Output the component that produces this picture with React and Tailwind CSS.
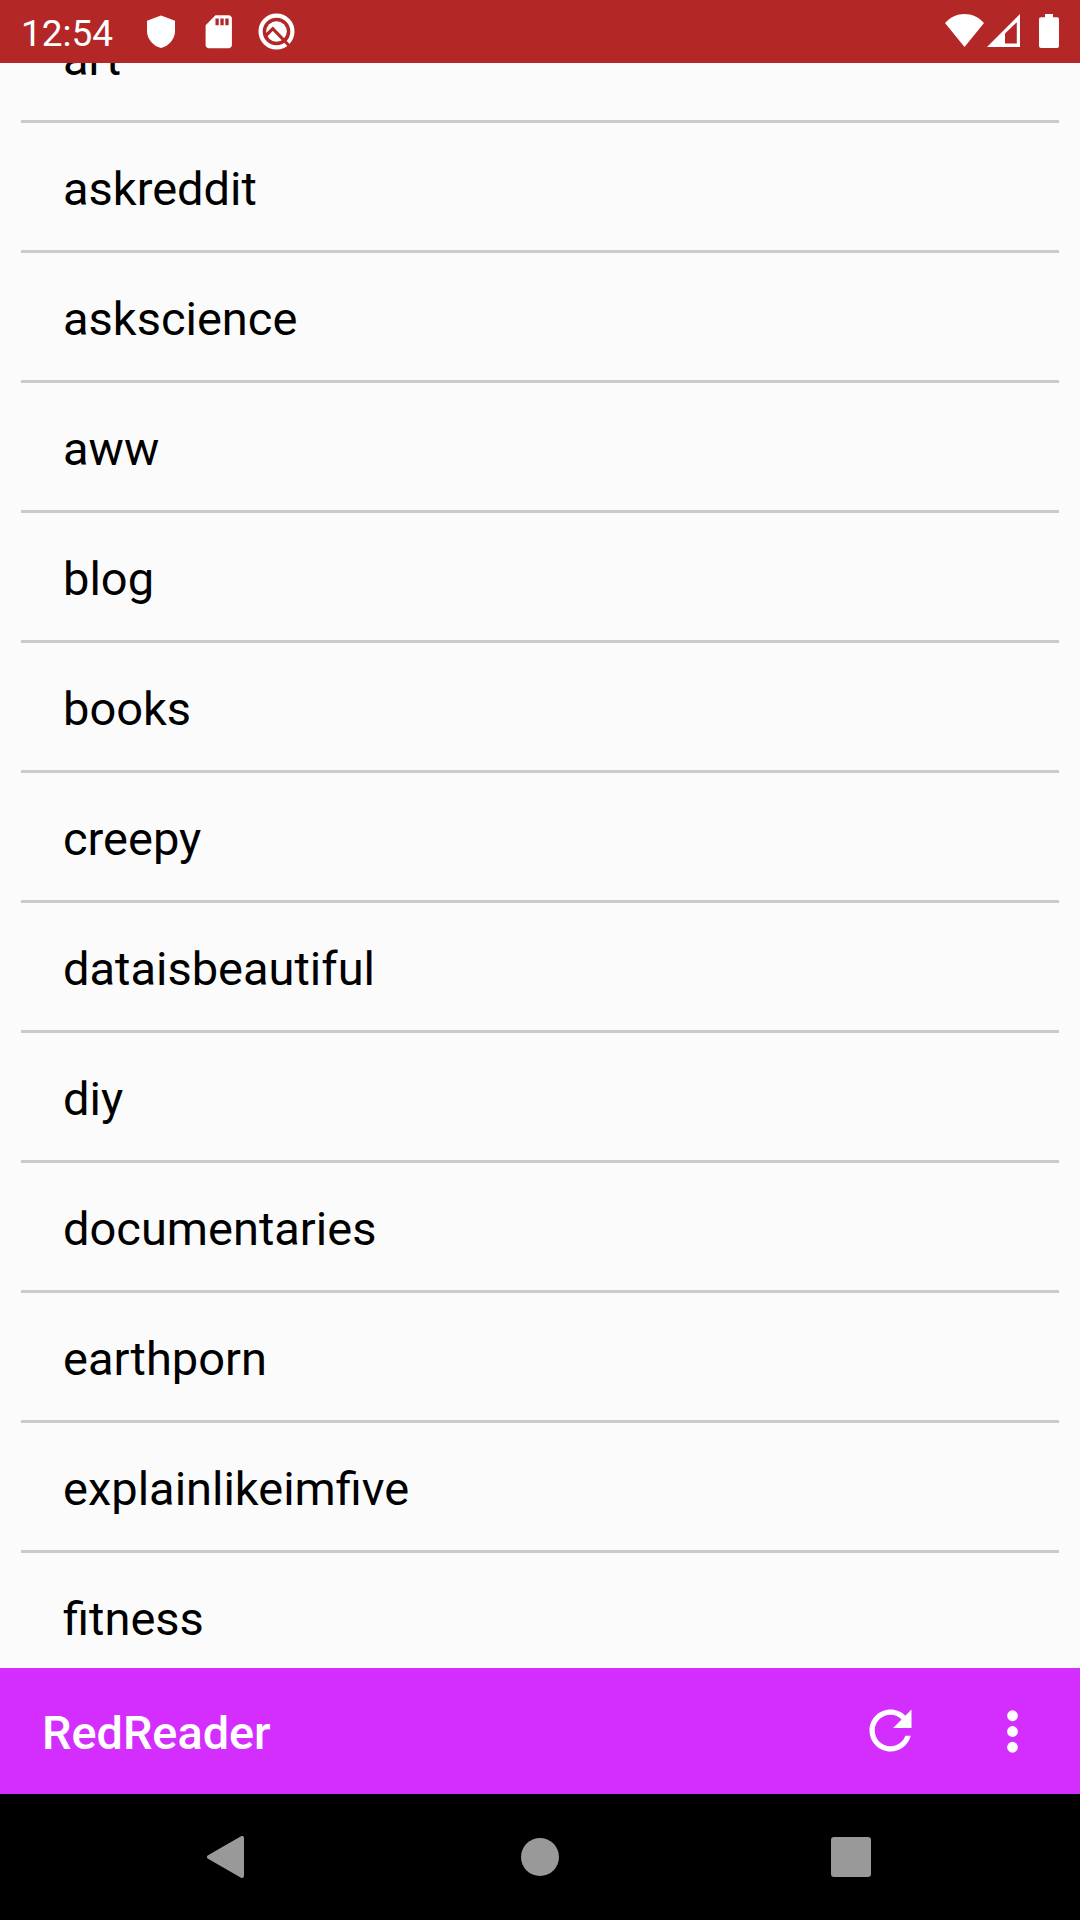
const subreddits = [
  'art', 'askreddit', 'askscience', 'aww', 'blog', 'books', 'creepy',
  'dataisbeautiful', 'diy', 'documentaries', 'earthporn', 'explainlikeimfive', 'fitness',
];

function StatusBar() {
  return (
    <header className="flex h-[63px] shrink-0 items-start justify-between bg-[#b42727] pl-[21px] pr-[21px] text-white">
      <div className="flex items-start">
        <span className="mt-[12px] w-[126px] text-[37px] leading-[44px]">12:54</span>
        <svg className="mt-[15px] h-[34px] w-[28px]" viewBox="0 0 28 34" fill="currentColor">
          <path d="M14 .5 28 5.8V16c0 8-6 15-14 17C6 31 0 24 0 16V5.800z" />
        </svg>
        <svg className="ml-[24px] mt-[12px] size-[39.5px]" viewBox="0 0 24 24" fill="currentColor">
          <path d="M18 2h-8L4.020 8 4 20c0 1.100.9 2 2 2h12c1.100 0 2-.9 2-2V4c0-1.100-.9-2-2-2zm-6 6h-2V4h2v4zm3 0h-2V4h2v4zm3 0h-2V4h2v4z" />
        </svg>
        <svg className="ml-[19.5px] mt-[13px] size-[37px]" viewBox="0 0 37 37" fill="none">
          <circle cx="18.500" cy="18.500" r="15.900" stroke="currentColor" strokeWidth="4.200" />
          <circle cx="18.500" cy="18.500" r="10.300" fill="currentColor" />
          <path d="M7.500 23 14.800 15.700 31.500 33" stroke="#b42727" strokeWidth="3.200" />
        </svg>
      </div>
      <div className="flex items-start">
        <svg className="mt-[14px] h-[33px] w-[39px]" viewBox="0 0 39 33" fill="currentColor">
          <path d="M0 9C5.500 3 12 0 19.500 0S33.500 3 39 9L19.500 33z" />
        </svg>
        <svg className="ml-[3px] mt-[14px] h-[33px] w-[33px]" viewBox="0 0 33 33" fill="currentColor" fillRule="evenodd">
          <path d="M33 0v33H0zM29.800 8.200 18 19.500v10h11.800z" />
        </svg>
        <svg className="ml-[19px] mt-[14px] h-[34px] w-[20px]" viewBox="0 0 20 34" fill="currentColor">
          <path d="M6 0h8v3.200h4a2 2 0 0 1 2 2V32a2 2 0 0 1-2 2H2a2 2 0 0 1-2-2V5.200a2 2 0 0 1 2-2h4z" />
        </svg>
      </div>
    </header>
  );
}

export default function App() {
  return (
    <div className="flex h-[1920px] w-[1080px] flex-col overflow-hidden bg-[#fbfbfb] font-['Roboto',sans-serif]">
      <StatusBar />
      <main className="min-h-0 flex-1 overflow-hidden px-[21px]">
        <ul className="-mt-[70px]">
          {subreddits.map((name) => (
            <li key={name} className="flex h-[130px] items-center border-b-[3px] border-[#cbcbcb] pl-[42px] pt-[5px] text-[47px] leading-[56px] text-black">
              {name}
            </li>
          ))}
        </ul>
      </main>
      <div className="flex h-[126px] shrink-0 items-center bg-[#d42eff] pl-[42px] pr-[36px] text-white">
        <h1 className="flex-1 pt-[3px] text-[46.800px] font-medium leading-[56px]">RedReader</h1>
        <svg className="mb-[2px] mr-[59px] size-[63px]" viewBox="0 0 24 24" fill="currentColor">
          <path d="M17.650 6.350C16.200 4.900 14.210 4 12 4c-4.420 0-7.990 3.580-7.990 8s3.570 8 7.990 8c3.730 0 6.840-2.550 7.730-6h-2.080c-.82 2.330-3.040 4-5.650 4-3.310 0-6-2.690-6-6s2.690-6 6-6c1.660 0 3.140.69 4.220 1.780L13 11h7V4l-2.350 2.350z" />
        </svg>
        <svg className="size-[63px]" viewBox="0 0 24 24" fill="currentColor">
          <circle cx="12" cy="6" r="2.050" />
          <circle cx="12" cy="12" r="2.050" />
          <circle cx="12" cy="18" r="2.050" />
        </svg>
      </div>
      <nav className="flex h-[126px] shrink-0 items-center justify-between bg-black pl-[207px] pr-[209px] text-[#999999]">
        <svg className="h-[42px] w-[37px]" viewBox="0 0 37 42" fill="currentColor" stroke="currentColor" strokeWidth="4" strokeLinejoin="round">
          <path d="M2 21 35 2v38z" />
        </svg>
        <div className="ml-[5px] size-[38px] rounded-full bg-[#999999]" />
        <div className="size-[40px] rounded-[3px] bg-[#999999]" />
      </nav>
    </div>
  );
}
